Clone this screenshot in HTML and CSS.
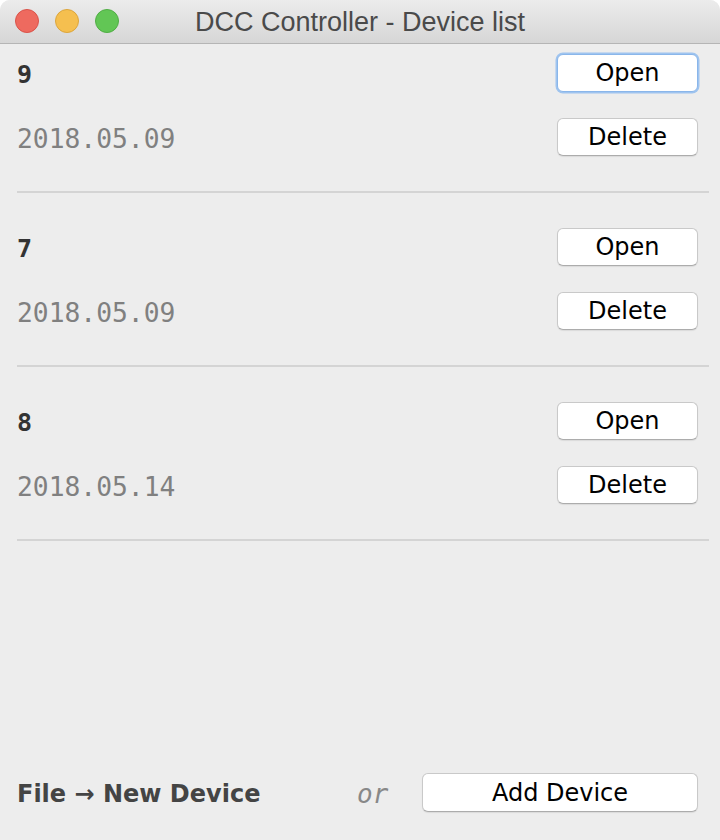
FILE: index.html
```html
<!DOCTYPE html>
<html>
<head>
<meta charset="utf-8">
<link rel="stylesheet" href="styles.css">
</head>
<body>
<div class="window">
  <div class="titlebar">
    <div class="lights">
      <span class="light red"></span>
      <span class="light yellow"></span>
      <span class="light green"></span>
    </div>
    <div class="title">DCC Controller - Device list</div>
  </div>
  <div class="content">
    <div class="list">
      <div class="entry">
        <div class="name">9</div>
        <button class="btn focused">Open</button>
        <div class="date">2018.05.09</div>
        <button class="btn">Delete</button>
      </div>
      <div class="sep"></div>
      <div class="entry">
        <div class="name">7</div>
        <button class="btn">Open</button>
        <div class="date">2018.05.09</div>
        <button class="btn">Delete</button>
      </div>
      <div class="sep"></div>
      <div class="entry">
        <div class="name">8</div>
        <button class="btn">Open</button>
        <div class="date">2018.05.14</div>
        <button class="btn">Delete</button>
      </div>
      <div class="sep"></div>
    </div>
    <div class="footer">
      <div class="hint">File → New Device</div>
      <div class="or">or</div>
      <button class="btn wide">Add Device</button>
    </div>
  </div>
</div>
</body>
</html>
```
FILE: styles.css
```css
html, body {
  margin: 0;
  padding: 0;
  background: #ffffff;
}
.window {
  width: 720px;
  height: 840px;
  display: flex;
  flex-direction: column;
  background: #ededed;
  border-radius: 10px 10px 0 0;
  overflow: hidden;
}
.titlebar {
  height: 43px;
  border-bottom: 1px solid #b5b5b5;
  background: linear-gradient(#ececec, #d6d6d6);
  display: flex;
  align-items: center;
  position: relative;
  flex-shrink: 0;
}
.lights {
  display: flex;
  gap: 16px;
  padding-left: 15px;
  position: absolute;
  left: 0;
  top: 9px;
}
.light {
  width: 24px;
  height: 24px;
  border-radius: 50%;
  box-sizing: border-box;
}
.red { background: #ee6a5f; border: 1px solid #d9534a; }
.yellow { background: #f5bf4f; border: 1px solid #dba53c; }
.green { background: #62c655; border: 1px solid #50ad45; }
.title {
  flex: 1;
  text-align: center;
  font-family: "Liberation Sans", Arial, sans-serif;
  font-size: 27px;
  color: #4a4a4a;
  padding-top: 2px;
}
.content {
  flex: 1;
  display: flex;
  flex-direction: column;
  padding: 10px 11px 28px 17px;
}
.entry {
  display: grid;
  grid-template-columns: 1fr 141px;
  row-gap: 26px;
  align-items: center;
  padding-right: 11px;
}
.name {
  font-family: "DejaVu Sans Mono", monospace;
  font-weight: bold;
  font-size: 25px;
  color: #333333;
  padding-top: 2px;
}
.date {
  font-family: "DejaVu Sans Mono", monospace;
  font-size: 26.3px;
  color: #808080;
  padding-top: 3px;
}
.sep {
  height: 2px;
  background: #d4d4d4;
  margin: 35px 0;
}
.btn {
  height: 38px;
  margin: 0;
  padding: 0;
  background: #ffffff;
  border: 1px solid #c9c9c9;
  border-bottom-color: #acacac;
  border-radius: 6px;
  box-shadow: 0 1px 1px rgba(0, 0, 0, 0.08);
  font-family: "DejaVu Sans", sans-serif;
  font-size: 24px;
  color: #000000;
  box-sizing: border-box;
}
.btn.focused {
  border-color: #8ab6ea;
  box-shadow: 0 0 0 1.5px #9fc4ef;
}
.footer {
  margin-top: auto;
  display: flex;
  align-items: center;
  padding-right: 11px;
}
.hint {
  font-family: "DejaVu Sans", sans-serif;
  font-weight: bold;
  font-size: 24px;
  color: #444444;
  width: 340px;
  padding-top: 2px;
}
.or {
  font-family: "DejaVu Sans Mono", monospace;
  font-style: italic;
  font-size: 26px;
  color: #888888;
  width: 65px;
  padding-top: 2px;
}
.btn.wide {
  width: 276px;
  height: 39px;
}
```
